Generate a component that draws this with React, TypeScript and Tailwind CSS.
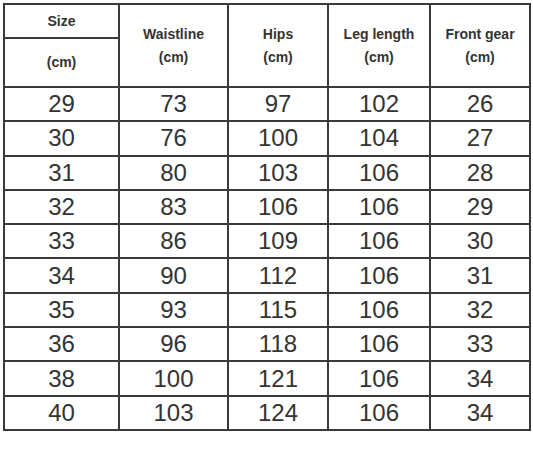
import React from 'react';

const rows = [
  ['29', '73', '97', '102', '26'],
  ['30', '76', '100', '104', '27'],
  ['31', '80', '103', '106', '28'],
  ['32', '83', '106', '106', '29'],
  ['33', '86', '109', '106', '30'],
  ['34', '90', '112', '106', '31'],
  ['35', '93', '115', '106', '32'],
  ['36', '96', '118', '106', '33'],
  ['38', '100', '121', '106', '34'],
  ['40', '103', '124', '106', '34'],
];

const headers = ['Waistline', 'Hips', 'Leg length', 'Front gear'];

const th = 'border-2 border-[#3a3a3a] text-center align-middle font-bold text-[14px] leading-[23px] text-[#333]';
const td = 'border-2 border-[#3a3a3a] text-center align-middle text-[24px] leading-none text-[#333] h-[34.3px] p-0';

export default function App() {
  return (
    <div className="w-[533px] h-[455px] bg-white pt-[3px] pl-[3px]" style={{ fontFamily: '"Liberation Sans", Arial, sans-serif' }}>
      <table className="border-collapse table-fixed w-[526px]">
        <colgroup>
          <col className="w-[115px]" />
          <col className="w-[109px]" />
          <col className="w-[100px]" />
          <col className="w-[102px]" />
          <col className="w-[100px]" />
        </colgroup>
        <thead>
          <tr className="h-[34px]">
            <th className={th}>Size</th>
            {headers.map((h) => (
              <th key={h} rowSpan={2} className={th}>
                {h}
                <br />
                (cm)
              </th>
            ))}
          </tr>
          <tr className="h-[49px]">
            <th className={th}>(cm)</th>
          </tr>
        </thead>
        <tbody>
          {rows.map((r) => (
            <tr key={r[0]}>
              {r.map((v, i) => (
                <td key={i} className={td}>
                  {v}
                </td>
              ))}
            </tr>
          ))}
        </tbody>
      </table>
    </div>
  );
}
